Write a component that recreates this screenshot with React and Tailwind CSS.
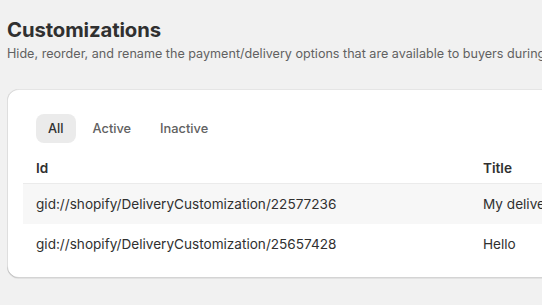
import React from "react";

const rows = [
  { id: "gid://shopify/DeliveryCustomization/22577236", title: "My delivery customization" },
  { id: "gid://shopify/DeliveryCustomization/25657428", title: "Hello" },
];

export default function App() {
  return (
    <div
      className="min-h-[305px] w-[542px] overflow-hidden bg-[#f1f1f1] text-[#303030]"
      style={{ fontFamily: "Inter, 'Noto Sans', sans-serif" }}
    >
      <div className="pl-[7px] pt-[18px]">
        <h1 className="whitespace-nowrap text-[20.3px] font-bold leading-[24px] tracking-[-0.1px]">Customizations</h1>
        <p className="mt-[2px] whitespace-nowrap text-[12.6px] leading-[20px] text-[#616161]">
          Hide, reorder, and rename the payment/delivery options that are available to buyers during checkout.
        </p>
        <div className="mt-[25px] w-[700px] rounded-[12px] bg-white px-[16px] pb-[14px] pt-[25px] shadow-[0_1px_0_0_rgba(26,26,26,0.07),0_1px_0_0_rgba(204,204,204,0.5)_inset,0_-1px_0_0_rgba(0,0,0,0.17)_inset,-1px_0_0_0_rgba(0,0,0,0.13)_inset,1px_0_0_0_rgba(0,0,0,0.13)_inset]">
          <div className="flex items-center gap-[5px] px-[13px]">
            <button className="h-[29px] rounded-[8px] bg-[#ebebeb] px-[12px] text-[12.8px] font-medium text-[#303030]">All</button>
            <button className="h-[29px] rounded-[8px] px-[12px] text-[12.8px] font-medium text-[#616161]">Active</button>
            <button className="h-[29px] rounded-[8px] px-[12px] text-[12.8px] font-medium text-[#616161]">Inactive</button>
          </div>
          <div className="flex h-[41px] items-end border-b border-[#ebebeb] pb-[5px] text-[13.6px] font-semibold">
            <div className="w-[447px] pl-[13px]">Id</div>
            <div className="pl-[13px]">Title</div>
          </div>
          {rows.map((r, i) => (
            <div
              key={r.id}
              className={`flex h-[40px] items-center pt-[1px] text-[13.6px] ${i === 0 ? "bg-[#f7f7f7]" : "bg-white"}`}
            >
              <div className="w-[447px] whitespace-nowrap pl-[13px]">{r.id}</div>
              <div className="whitespace-nowrap pl-[13px]">{r.title}</div>
            </div>
          ))}
        </div>
      </div>
    </div>
  );
}
